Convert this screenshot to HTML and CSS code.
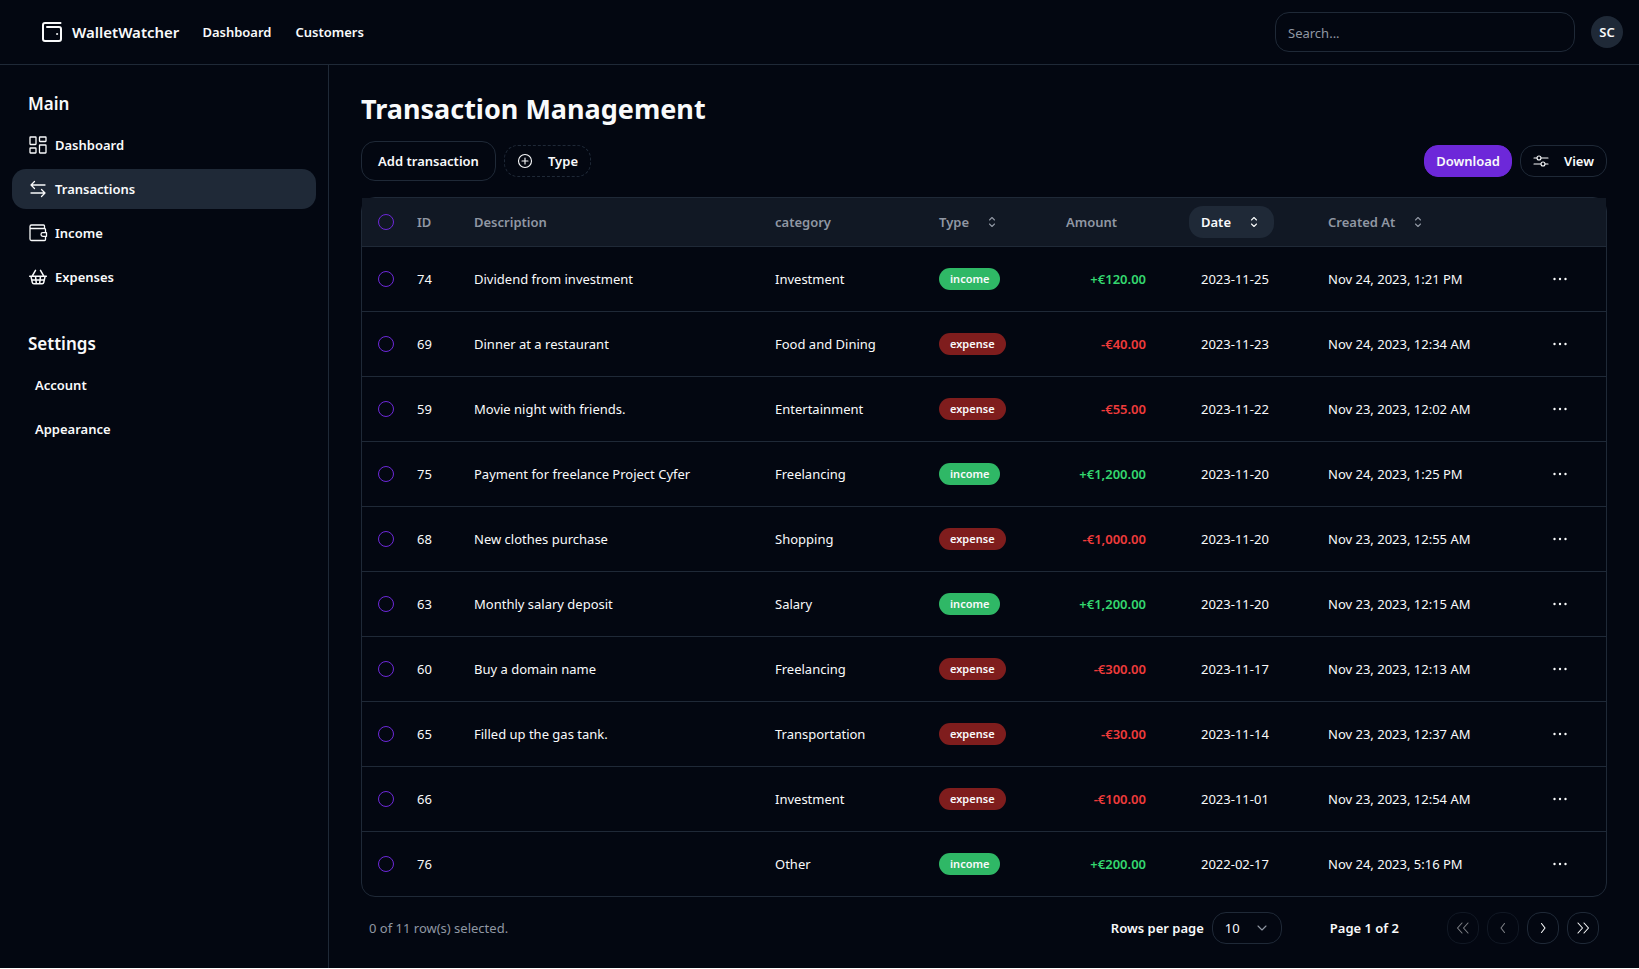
FILE: index.html
```html
<!DOCTYPE html>
<html lang="en">
<head>
<meta charset="utf-8">
<meta name="viewport" content="width=device-width, initial-scale=1">
<title>WalletWatcher</title>
<link rel="stylesheet" href="styles.css">
</head>
<body>
<header class="topbar">
  <a class="brand" href="#">
    <svg class="icon icon-brand" viewBox="0 0 24 24"><path d="M20.500 3H5a2 2 0 0 0-2 2V19A2 2 0 0 0 5 21h14a2 2 0 0 0 2-2V9A2 2 0 0 0 19 7H7"/><circle cx="17" cy="14" r=".6" fill="currentColor" stroke-width=".8"/></svg>
    WalletWatcher
  </a>
  <nav class="topnav">
    <a href="#">Dashboard</a>
    <a href="#">Customers</a>
  </nav>
  <input class="search" type="search" placeholder="Search..." aria-label="Search">
  <button class="avatar" type="button">SC</button>
</header>
<div class="shell">
  <aside class="sidebar">
    <section>
      <h2>Main</h2>
      <nav>
        <a href="#"><svg class="icon" viewBox="0 0 20 20"><rect x="2" y="2" width="6" height="7.500" rx=".5"/><rect x="11.500" y="2" width="6.500" height="4.500" rx=".5"/><rect x="11.500" y="10" width="6.500" height="8" rx=".5"/><rect x="2" y="13" width="6" height="5" rx=".5"/></svg>Dashboard</a>
        <a href="#" class="active"><svg class="icon" viewBox="0 0 20 20"><path d="M17 6H3M6.500 2.500 3 6l3.500 3.500M3 14h14M13.500 10.500 17 14l-3.500 3.500"/></svg>Transactions</a>
        <a href="#"><svg class="icon" viewBox="0 0 20 20"><path d="M16.500 5.500V3a1 1 0 0 0-1-1H3.500a1.500 1.500 0 0 0-1.500 1.500V16a1.500 1.500 0 0 0 1.500 1.500H16.500a1 1 0 0 0 1-1V14M2 4.500a1 1 0 0 0 1 1h13.500a1 1 0 0 1 1 1V9M18.500 9.700h-3.700a1.800 1.800 0 0 0 0 3.600h3.700z"/></svg>Income</a>
        <a href="#"><svg class="icon icon-basket" viewBox="0 0 24 24"><path d="m5 11 4-7M19 11l-4-7M2 11h20M3.500 11l1.600 7.400a2 2 0 0 0 2 1.600h9.800a2 2 0 0 0 2-1.600l1.700-7.400M9 11l1 9M4.500 15.500h15M15 11l-1 9"/></svg>Expenses</a>
      </nav>
    </section>
    <section>
      <h2>Settings</h2>
      <nav class="plain">
        <a href="#">Account</a>
        <a href="#">Appearance</a>
      </nav>
    </section>
  </aside>
  <main class="content">
    <h1>Transaction Management</h1>
    <div class="toolbar">
      <button class="btn btn-lg" type="button">Add transaction</button>
      <button class="btn dashed" type="button"><svg class="icon-sm" viewBox="0 0 16 16"><circle cx="8" cy="8" r="6.500"/><path d="M8 5v6M5 8h6"/></svg>Type</button>
      <button class="btn primary" type="button">Download</button>
      <button class="btn" type="button"><svg class="icon-sm" viewBox="0 0 16 16"><path d="M1 5h3M8 5h7M1 11h7M12 11h3"/><circle cx="6" cy="5" r="2"/><circle cx="10" cy="11" r="2"/></svg>View</button>
    </div>
    <div class="table-box">
      <table>
        <colgroup><col class="c-check"><col class="c-id"><col><col class="c-category"><col class="c-type"><col class="c-amount"><col class="c-date"><col class="c-created"><col class="c-more"></colgroup>
        <thead>
          <tr>
            <th><input type="checkbox" aria-label="Select all"></th>
            <th>ID</th><th>Description</th><th>category</th>
            <th><button class="sort" type="button">Type<svg class="icon-sm" viewBox="0 0 16 16"><path d="m5.500 6 2.500-2.500 2.500 2.500M5.500 10l2.500 2.500 2.500-2.500"/></svg></button></th>
            <th>Amount</th>
            <th><button class="sort sorted" type="button">Date<svg class="icon-sm" viewBox="0 0 16 16"><path d="m5.500 6 2.500-2.500 2.500 2.500M5.500 10l2.500 2.500 2.500-2.500"/></svg></button></th>
            <th><button class="sort" type="button">Created At<svg class="icon-sm" viewBox="0 0 16 16"><path d="m5.500 6 2.500-2.500 2.500 2.500M5.500 10l2.500 2.500 2.500-2.500"/></svg></button></th>
            <th></th>
          </tr>
        </thead>
        <tbody id="rows"></tbody>
      </table>
    </div>
    <footer class="pager">
      <p class="selected">0 of 11 row(s) selected.</p>
      <label for="size">Rows per page</label>
      <span class="select-box">
        <select id="size"><option>10</option><option>20</option></select>
        <svg class="icon-sm" viewBox="0 0 16 16"><path d="m4 6 4 4 4-4"/></svg>
      </span>
      <p class="page">Page 1 of 2</p>
      <div class="steps">
        <button type="button" disabled aria-label="First page"><svg class="icon-sm" viewBox="0 0 16 16"><path d="M7 3 2.500 8 7 13M13 3 8.500 8l4.500 5"/></svg></button>
        <button type="button" disabled aria-label="Previous page"><svg class="icon-sm" viewBox="0 0 16 16"><path d="M9.500 3.500 6 8l3.500 4.500"/></svg></button>
        <button type="button" aria-label="Next page"><svg class="icon-sm" viewBox="0 0 16 16"><path d="M6.500 3.500 10 8l-3.500 4.500"/></svg></button>
        <button type="button" aria-label="Last page"><svg class="icon-sm" viewBox="0 0 16 16"><path d="M3 3l4.500 5L3 13M9 3l4.500 5L9 13"/></svg></button>
      </div>
    </footer>
  </main>
</div>
<script src="rows.js"></script>
</body>
</html>
```
FILE: styles.css
```css
:root {
  --bg: #030711;
  --line: #1f2937;
  --text: #f9fafb;
  --muted: #9097a3;
  --primary: #6d28d9;
}
* { box-sizing: border-box; }
body {
  display: flex;
  flex-direction: column;
  min-height: 100vh;
  margin: 0;
  border-bottom: 1px solid #fff;
  background: var(--bg);
  color: var(--text);
  font: 13px/20px "Segoe UI", "Noto Sans", sans-serif;
}
h1, h2, p { margin: 0; }
a { color: inherit; text-decoration: none; }
button, input, select { margin: 0; color: inherit; font: inherit; }
svg { flex: none; fill: none; stroke: currentColor; stroke-width: 1.3; stroke-linecap: round; stroke-linejoin: round; }
.icon { width: 20px; height: 20px; }
.icon-sm { width: 16px; height: 16px; stroke-width: 1.1; }
.icon-brand { width: 24px; height: 24px; stroke-width: 2; }
.icon-basket { stroke-width: 1.8; }

.topbar {
  display: flex;
  align-items: center;
  height: 65px;
  padding: 0 16px 0 40px;
  border-bottom: 1px solid var(--line);
}
.brand { display: flex; align-items: center; gap: 8px; font-size: 15px; font-weight: 600; }
.topnav { display: flex; gap: 24px; margin-left: 23px; font-weight: 600; }
.search {
  width: 300px;
  height: 40px;
  margin-left: auto;
  padding: 4px 12px 2px;
  border: 1px solid var(--line);
  border-radius: 14px;
  background: transparent;
  appearance: none;
}
.search::placeholder { color: var(--muted); opacity: 1; }
.avatar {
  width: 32px;
  height: 32px;
  margin-left: 16px;
  padding: 0;
  border: 0;
  border-radius: 50%;
  background: var(--line);
  font-weight: 600;
}

.shell { display: flex; flex: 1; }
.sidebar { flex: none; width: 329px; padding: 24px 12px; border-right: 1px solid var(--line); }
.sidebar section { margin-bottom: 32px; }
.sidebar h2 { padding: 2px 16px 0; font-size: 17px; font-weight: 600; line-height: 26px; }
.sidebar nav { display: flex; flex-direction: column; gap: 4px; padding-top: 8px; }
.sidebar nav a {
  display: flex;
  align-items: center;
  gap: 7px;
  height: 40px;
  padding: 0 16px;
  border-radius: 14px;
  font-weight: 600;
}
.sidebar nav.plain a { padding: 0 23px; }
.sidebar .active { background: var(--line); }

.content { flex: 1; min-width: 0; padding: 24px 32px 0; }
h1 { font-size: 27px; font-weight: 700; line-height: 40px; }
.toolbar { display: flex; align-items: center; gap: 8px; margin: 12px 0 16px; }
.btn {
  display: flex;
  align-items: center;
  justify-content: center;
  gap: 15px;
  min-width: 87px;
  height: 32px;
  padding: 0 11px;
  border: 1px solid var(--line);
  border-radius: 14px;
  background: transparent;
  font-weight: 600;
}
.btn-lg { min-width: 135px; height: 40px; }
.dashed { border-style: dashed; }
.primary { margin-left: auto; border-color: var(--primary); background: var(--primary); }

.table-box { border: 1px solid var(--line); border-radius: 14px; }
table { width: 100%; table-layout: fixed; border-collapse: collapse; }
.c-check { width: 39px; }
.c-id { width: 57px; }
.c-category { width: 164px; }
.c-type { width: 127px; }
.c-amount { width: 135px; }
.c-date { width: 127px; }
.c-created { width: 216px; }
.c-more { width: 78px; }
th, td { padding: 0 16px; text-align: left; white-space: nowrap; vertical-align: middle; }
tr > :first-child { padding-right: 0; }
thead tr { height: 48px; background: #111824; }
th { color: var(--muted); font-weight: 600; }
tbody tr { height: 65px; }
thead tr, tbody tr:not(:last-child) { border-bottom: 1px solid var(--line); }
input[type="checkbox"] {
  display: block;
  width: 16px;
  height: 16px;
  border: 1px solid var(--primary);
  border-radius: 50%;
  appearance: none;
}
.sort {
  display: inline-flex;
  align-items: center;
  gap: 15px;
  height: 32px;
  margin-left: -12px;
  padding: 0 12px;
  border: 0;
  border-radius: 14px;
  background: transparent;
}
.sorted { background: var(--line); color: var(--text); }
.badge {
  display: inline-block;
  padding: 1px 11px;
  border-radius: 11px;
  font-size: 11px;
  font-weight: 600;
  line-height: 20px;
}
.badge.income { background: #2fb866; }
.badge.expense { background: #7f1d1d; }
.amount { padding-right: 39px; text-align: right; font-weight: 600; }
.amount.income { color: #34d76f; }
.amount.expense { color: #ef3b3b; }
.more { display: grid; place-items: center; width: 32px; height: 32px; padding: 0; border: 0; background: transparent; }
.more svg { fill: currentColor; stroke: none; }

.pager { display: flex; align-items: center; padding: 15px 8px; font-weight: 600; }
.selected { margin-right: auto; color: var(--muted); font-weight: 400; }
.select-box { display: grid; align-items: center; width: 70px; margin: 0 48px 0 8px; font-weight: 400; }
.select-box > * { grid-area: 1 / 1; }
.select-box select {
  height: 32px;
  padding: 0 12px;
  border: 1px solid var(--line);
  border-radius: 14px;
  background: transparent;
  appearance: none;
}
.select-box svg { justify-self: end; margin-right: 12px; color: var(--muted); pointer-events: none; }
.steps { display: flex; gap: 8px; margin-left: 48px; }
.steps button {
  display: grid;
  place-items: center;
  width: 32px;
  height: 32px;
  padding: 0;
  border: 1px solid var(--line);
  border-radius: 14px;
  background: transparent;
}
.steps button:disabled { opacity: .5; }
```
FILE: rows.js
```js
const rows = [
  [74, "Dividend from investment", "Investment", "income", "+€120.00", "2023-11-25", "Nov 24, 2023, 1:21 PM"],
  [69, "Dinner at a restaurant", "Food and Dining", "expense", "-€40.00", "2023-11-23", "Nov 24, 2023, 12:34 AM"],
  [59, "Movie night with friends.", "Entertainment", "expense", "-€55.00", "2023-11-22", "Nov 23, 2023, 12:02 AM"],
  [75, "Payment for freelance Project Cyfer", "Freelancing", "income", "+€1,200.00", "2023-11-20", "Nov 24, 2023, 1:25 PM"],
  [68, "New clothes purchase", "Shopping", "expense", "-€1,000.00", "2023-11-20", "Nov 23, 2023, 12:55 AM"],
  [63, "Monthly salary deposit", "Salary", "income", "+€1,200.00", "2023-11-20", "Nov 23, 2023, 12:15 AM"],
  [60, "Buy a domain name", "Freelancing", "expense", "-€300.00", "2023-11-17", "Nov 23, 2023, 12:13 AM"],
  [65, "Filled up the gas tank.", "Transportation", "expense", "-€30.00", "2023-11-14", "Nov 23, 2023, 12:37 AM"],
  [66, "", "Investment", "expense", "-€100.00", "2023-11-01", "Nov 23, 2023, 12:54 AM"],
  [76, "", "Other", "income", "+€200.00", "2022-02-17", "Nov 24, 2023, 5:16 PM"],
];

document.getElementById("rows").innerHTML = rows.map(([id, description, category, type, amount, date, created]) => `
  <tr>
    <td><input type="checkbox" aria-label="Select row ${id}"></td>
    <td>${id}</td>
    <td>${description}</td>
    <td>${category}</td>
    <td><span class="badge ${type}">${type}</span></td>
    <td class="amount ${type}">${amount}</td>
    <td>${date}</td>
    <td>${created}</td>
    <td><button class="more" type="button" aria-label="Open menu"><svg class="icon-sm" viewBox="0 0 16 16"><circle cx="2.500" cy="8" r="1.200"/><circle cx="8" cy="8" r="1.200"/><circle cx="13.500" cy="8" r="1.200"/></svg></button></td>
  </tr>`).join("");
```
